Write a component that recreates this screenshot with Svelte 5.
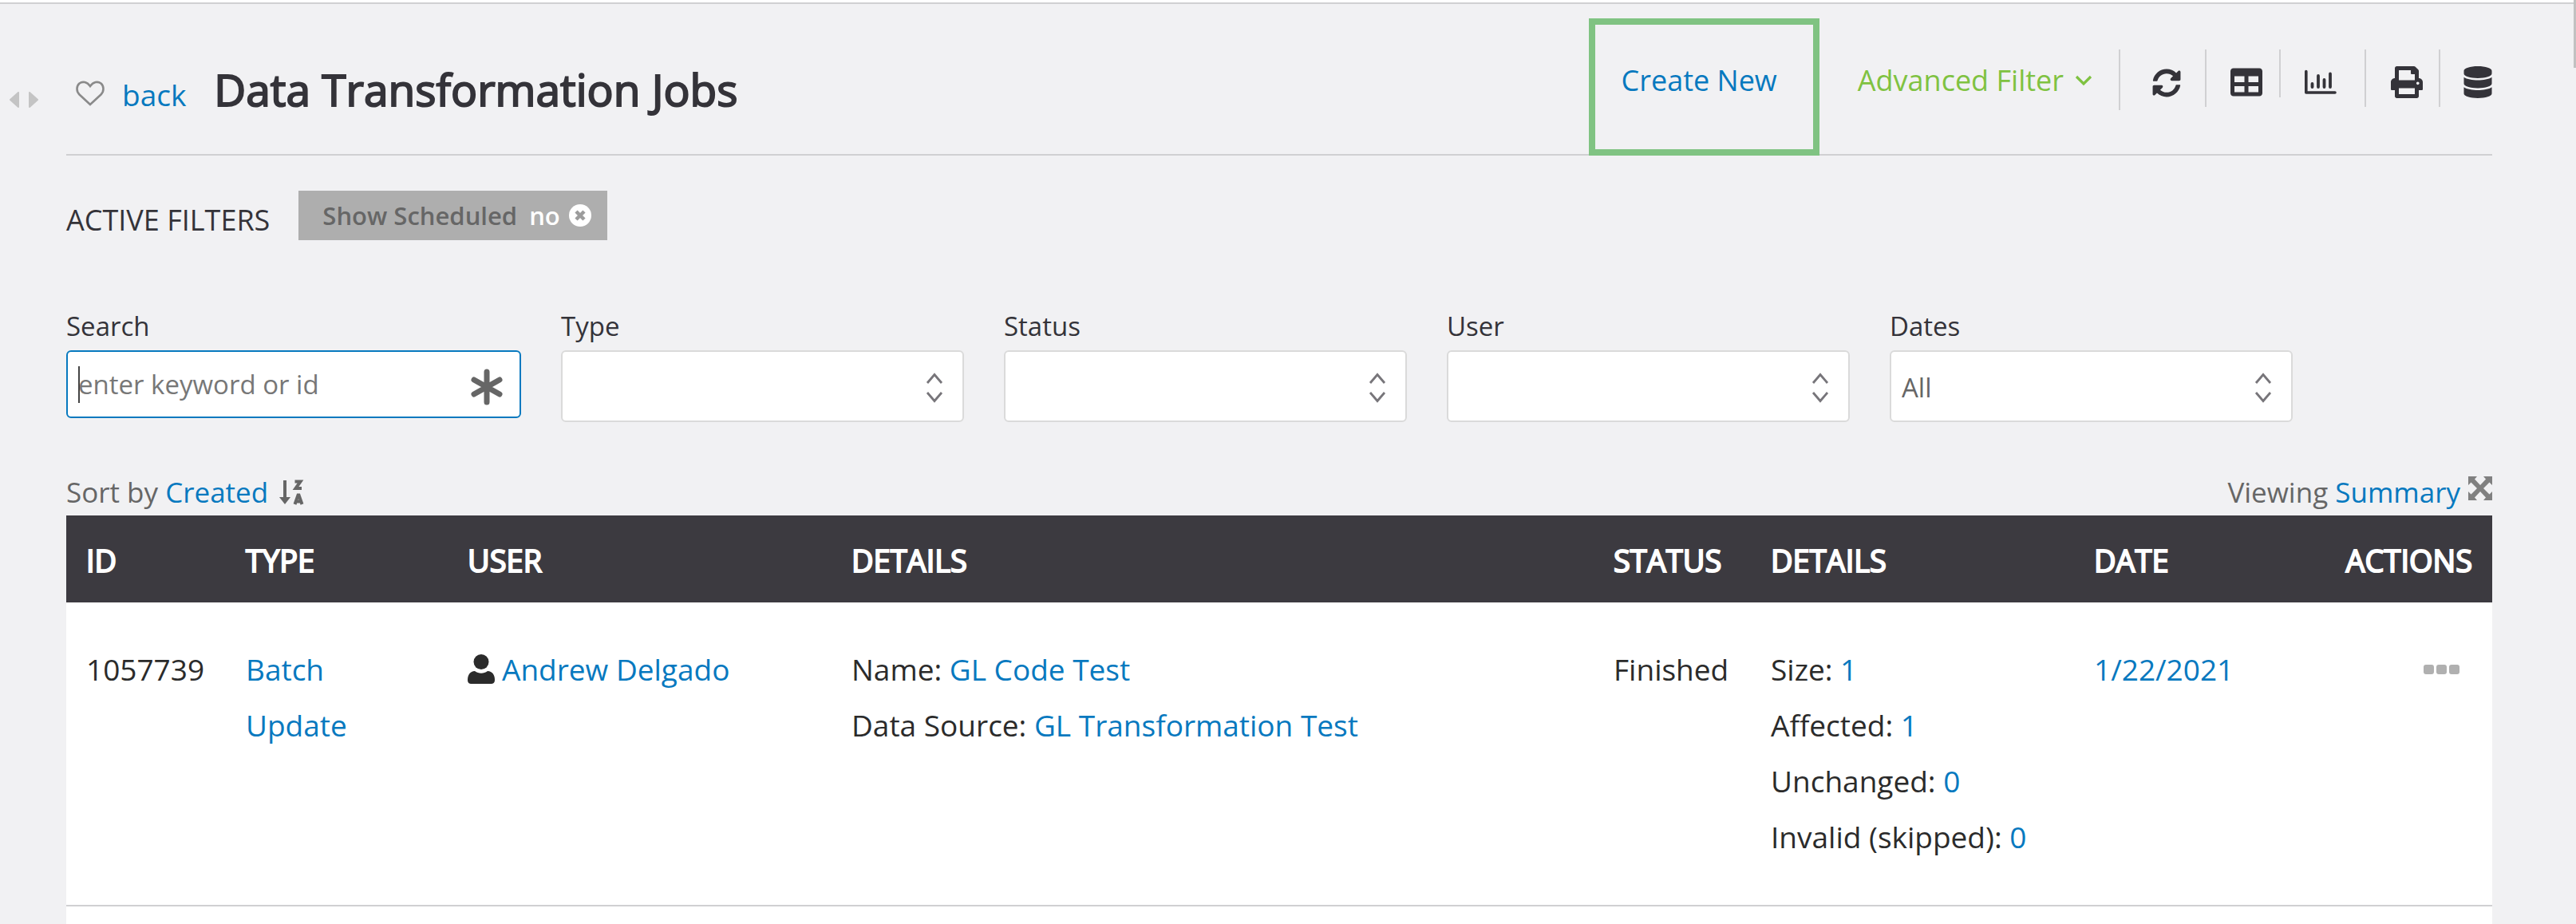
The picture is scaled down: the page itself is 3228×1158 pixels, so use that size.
<script>
  const selects = [
    { id: 'type', label: 'Type', value: '' },
    { id: 'status', label: 'Status', value: '' },
    { id: 'user', label: 'User', value: '' },
    { id: 'dates', label: 'Dates', value: 'All' }
  ];
  const counts = [
    { label: 'Size', value: 1 },
    { label: 'Affected', value: 1 },
    { label: 'Unchanged', value: 0 },
    { label: 'Invalid (skipped)', value: 0 }
  ];
</script>

<div class="page">
<div class="topline"></div>
<div class="scrollbar" aria-hidden="true"></div>
<div class="shell">
  <button class="resizer" aria-label="Resize panel">
    <svg viewBox="0 0 36 20" width="36" height="20"><path d="M11 1v18L1 10zM25 1v18L35 10z" fill="#c4c4c4" stroke="#c4c4c4" stroke-width="2" stroke-linejoin="round" /></svg>
  </button>
  <main>
    <header>
      <div class="heading">
        <button class="plain heart" aria-label="Add to favourites">
          <svg viewBox="0 0 36 32" width="36" height="32"><path d="M18 30L4.500 17.500C0.500 13.500 .5 7 4.500 3.500C8.500 .5 14 1.500 18 7C22 1.500 27.500 .5 31.500 3.500C35.500 7 35.500 13.500 31.500 17.500Z" fill="none" stroke="#8a8a8a" stroke-width="2.600" /></svg>
        </button>
        <a class="back" href="#back">back</a>
        <h1>Data Transformation Jobs</h1>
      </div>
      <nav class="tools">
        <a class="create" href="#create">Create New</a>
        <button class="plain advanced">
          Advanced Filter
          <svg viewBox="0 0 22 14" width="22" height="14"><path d="M2 2l9 9 9-9" fill="none" stroke="#7fc241" stroke-width="3.200" /></svg>
        </button>
        <div class="icons">
          <button class="plain ic refresh" aria-label="Refresh">
            <svg viewBox="0 0 512 512" width="36" height="36"><path fill="#343339" d="M370.700 133.300C339.500 104 298.900 88 255.800 88c-77.500.1-144.300 53.200-162.800 126.900-1.300 5.400-6.100 9.200-11.700 9.200H24.100c-7.500 0-13.200-6.800-11.800-14.200C33.900 94.900 134.800 8 256 8c66.400 0 126.800 26.100 171.300 68.700L463 41C478.100 25.900 504 36.600 504 57.900V192c0 13.300-10.700 24-24 24H345.900c-21.400 0-32.100-25.900-17-41l41.800-41.700zM32 296h134.100c21.400 0 32.100 25.900 17 41l-41.800 41.800c31.300 29.300 71.800 45.300 114.900 45.300 77.400-.1 144.300-53.100 162.800-126.800 1.300-5.400 6.100-9.200 11.700-9.200h57.300c7.500 0 13.200 6.800 11.800 14.200C478.100 417.100 377.200 504 256 504c-66.400 0-126.800-26.100-171.300-68.700L49 471C33.900 486.100 8 475.400 8 454.100V320c0-13.300 10.700-24 24-24z" /></svg>
          </button>
          <button class="plain ic table" aria-label="Table view">
            <svg viewBox="0 0 512 512" width="40" height="40"><path fill="#343339" d="M464 32H48C21.500 32 0 53.500 0 80v352c0 26.500 21.500 48 48 48h416c26.500 0 48-21.500 48-48V80c0-26.500-21.500-48-48-48zM224 416H64v-96h160v96zm0-160H64v-96h160v96zm224 160H288v-96h160v96zm0-160H288v-96h160v96z" /></svg>
          </button>
          <button class="plain ic chart" aria-label="Chart view">
            <svg viewBox="0 0 40 32" width="40" height="32" fill="none" stroke="#343339" stroke-linecap="round" stroke-linejoin="round"><path d="M1.800 2.500v26.500H38" stroke-width="3.600" /><path d="M9.500 18v4M17 8v14M24.500 13v9M32 5.500v16.500" stroke-width="3.800" /></svg>
          </button>
          <button class="plain ic print" aria-label="Print">
            <svg viewBox="0 0 512 512" width="40" height="40"><path fill="#343339" d="M448 192V77.300c0-8.500-3.400-16.600-9.400-22.600L393.400 9.400c-6-6-14.100-9.400-22.600-9.400H96C78.300 0 64 14.300 64 32v160c-35.400 0-64 28.700-64 64v112c0 8.800 7.200 16 16 16h48v96c0 17.700 14.300 32 32 32h320c17.700 0 32-14.300 32-32v-96h48c8.800 0 16-7.200 16-16V256c0-35.400-28.700-64-64-64zm-64 256H128v-96h256v96zm0-224H128V64h192v48c0 8.800 7.200 16 16 16h48v96zm48 72c-13.300 0-24-10.800-24-24 0-13.300 10.700-24 24-24s24 10.700 24 24c0 13.300-10.700 24-24 24z" /></svg>
          </button>
          <button class="plain ic database" aria-label="Data sources">
            <svg viewBox="0 0 448 512" width="36" height="40"><path fill="#343339" d="M448 73.100v45.700C448 159.100 347.700 192 224 192S0 159.100 0 118.900V73.100C0 32.900 100.300 0 224 0s224 32.900 224 73.100zM448 176v102.900C448 319.100 347.700 352 224 352S0 319.100 0 278.900V176c48.100 33.100 136.200 48.600 224 48.600S399.900 209.100 448 176zm0 160v102.900C448 479.100 347.700 512 224 512S0 479.100 0 438.900V336c48.100 33.100 136.200 48.600 224 48.600S399.900 369.100 448 336z" /></svg>
          </button>
        </div>
      </nav>
    </header>

    <section class="active">
      <h2>ACTIVE FILTERS</h2>
      <div class="chip">
        <span>Show Scheduled</span>
        <strong>no</strong>
        <button class="plain" aria-label="Remove filter">
          <svg viewBox="0 0 28 28" width="28" height="28"><circle cx="14" cy="14" r="14" fill="#fff" /><path d="M9 9l10 10M19 9L9 19" stroke="#9c9c9c" stroke-width="4.500" /></svg>
        </button>
      </div>
    </section>

    <form class="filters">
      <div class="field search">
        <label for="q">Search</label>
        <div class="box">
          <input id="q" type="text" placeholder="enter keyword or id" />
          <span class="caret"></span>
          <svg viewBox="0 0 42 46" width="42" height="46"><path d="M21 4v38M5 14l32 18M37 14L5 32" stroke="#666" stroke-width="7" stroke-linecap="round" /></svg>
        </div>
      </div>
      {#each selects as s}
        <div class="field">
          <label for={s.id}>{s.label}</label>
          <div class="box">
            <select id={s.id}><option>{s.value}</option></select>
            <svg viewBox="0 0 22 38" width="22" height="38"><path d="M2 13l9-10.500L20 13M2 25l9 10.500L20 25" fill="none" stroke="#77757a" stroke-width="2.800" /></svg>
          </div>
        </div>
      {/each}
    </form>

    <div class="bar">
      <div class="sort">
        <span>Sort by <a href="#sort">Created</a></span>
        <svg viewBox="0 0 32 32" width="32" height="32" fill="none" stroke="#666"><path d="M7 1v24" stroke-width="4" /><path d="M0 22h14L7 31z" fill="#666" stroke="none" /><path d="M19.500 2.500h7l-6 8.500h7.500" stroke-width="4" /><path d="M19.500 31l4-11.500h1l4 11.500M21 27.500h6" stroke-width="4" /></svg>
      </div>
      <div class="view">
        <span>Viewing <a href="#view">Summary</a></span>
        <button class="plain" aria-label="Expand">
          <svg viewBox="0 0 30 30" width="30" height="30"><path d="M0 0h11L8 3.500l7 7.500 7-7.500L19 0h11v11l-3.500-3.500L19 15l7.500 7.500L30 19v11H19l3-3.500-7-7.500-7 7.500 3 3.500H0V19l3.500 3.500L11 15 3.500 7.500 0 11z" fill="#808080" /></svg>
        </button>
      </div>
    </div>

    <div class="sheet">
    <table>
      <colgroup>
        <col class="c1" /><col class="c2" /><col class="c3" /><col class="c4" /><col class="c5" /><col class="c6" /><col class="c7" /><col class="c8" />
      </colgroup>
      <thead>
        <tr><th>ID</th><th>TYPE</th><th>USER</th><th>DETAILS</th><th>STATUS</th><th>DETAILS</th><th>DATE</th><th class="end">ACTIONS</th></tr>
      </thead>
      <tbody>
        <tr>
          <td>1057739</td>
          <td><a href="#job">Batch<br />Update</a></td>
          <td>
            <div class="person">
              <svg viewBox="0 0 34 38" width="34" height="38" fill="#2b2b2b"><ellipse cx="17" cy="9.500" rx="9.500" ry="9.500" /><path d="M9 21c5 3.500 11 3.500 16 0 6 0 9 5 9 11 0 4-2 5-5 5H5c-3 0-5-1-5-5 0-6 3-11 9-11z" /></svg>
              <a href="#user">Andrew Delgado</a>
            </div>
          </td>
          <td>Name: <a href="#name">GL Code Test</a><br />Data Source: <a href="#source">GL Transformation Test</a></td>
          <td>Finished</td>
          <td>
            {#each counts as c}
              <div>{c.label}: <a href="#count">{c.value}</a></div>
            {/each}
          </td>
          <td><a href="#date">1/22/2021</a></td>
          <td class="end">
            <button class="plain more" aria-label="Row actions">
              <svg viewBox="0 0 46 12" width="46" height="12" fill="#b0b0b0"><rect width="13" height="12" rx="3" /><rect x="16" width="13" height="12" rx="3" /><rect x="32" width="13" height="12" rx="3" /></svg>
            </button>
          </td>
        </tr>
      </tbody>
    </table>
    </div>
  </main>
</div>
</div>

<style>
  :global(body) { background: #f1f1f3; }
  :global(#app) { font-family: 'Open Sans', sans-serif; font-size: 36px; color: #2b2b2b; }
  * { box-sizing: border-box; }
  a { color: #0779bf; text-decoration: none; }
  svg { display: block; flex: none; }
  .plain { border: 0; background: none; padding: 0; font: inherit; color: inherit; display: flex; align-items: center; }
  .page { display: flex; flex-direction: column; min-height: 100vh; }
  .topline { height: 5px; background: #fff; border-bottom: 2px solid #d0d0d2; flex: none; }
  .scrollbar { position: absolute; top: 0; right: 0; width: 3px; height: 85px; background: #c1c1c1; }
  .shell { display: flex; flex: 1; }
  .resizer { width: 83px; margin-top: 110px; padding: 0 0 0 12px; border: 0; background: none; flex: none; display: flex; align-self: flex-start; }
  main { flex: 1; min-width: 0; margin-right: 105px; display: flex; flex-direction: column; }
  header { display: flex; justify-content: space-between; height: 190px; border-bottom: 2px solid #d0d0d2; }
  .heading { display: flex; align-items: baseline; padding: 68px 0 0 12px; }
  .heart { padding-bottom: 4px; }
  .back { margin: 0 35px 0 22px; font-size: 37px; }
  h1 { margin: 0; font-size: 55px; line-height: 78px; font-weight: 400; color: #343339; -webkit-text-stroke: 2px #343339; }
  .tools { display: flex; align-items: flex-start; font-size: 36px; line-height: 50px; }
  .create { border: 8px solid #80c382; margin: 18px 48px 0 0; height: 172px; padding: 45px 45px 0 33px; }
  .advanced { color: #7fc241; gap: 14px; margin: 71px 33px 0 0; }
  .icons { display: flex; align-items: flex-start; padding-top: 57px; }
  .ic { height: 72px; border-left: 2px solid #d0d0d2; align-items: flex-start; padding-top: 21px; }
  .refresh { width: 108px; height: 76px; padding: 24px 0 0 40px; }
  .table { width: 93px; padding-left: 30px; }
  .chart { width: 107px; height: 60px; padding: 25px 0 0 30px; }
  .print { width: 93px; padding-left: 31px; }
  .database { padding-left: 29px; }

  .active { display: flex; align-items: center; gap: 36px; margin-top: 44px; height: 62px; }
  h2 { margin: 0; font-size: 36px; font-weight: 400; line-height: 48px; padding-top: 12px; color: #343339; }
  .chip { display: flex; align-items: center; height: 62px; padding: 0 20px 0 30px; background: #aeaeae; font-weight: 600; font-size: 31px; line-height: 40px; color: #666; }
  .chip strong { color: #fff; font-weight: 600; margin: 0 11px 0 15px; }

  .filters { display: flex; gap: 50px; margin-top: 84px; margin-right: 250px; align-items: flex-start; }
  .field { flex: 505 1 0; min-width: 0; color: #343339; }
  .search { flex-grow: 570; }
  label { display: block; font-size: 33px; line-height: 48px; margin-bottom: 6px; }
  .box { position: relative; height: 90px; }
  .search .box { height: 85px; }
  input, select { width: 100%; height: 100%; border: 2px solid #dadada; border-radius: 6px; background: #fff; font: 33px/48px 'Open Sans', sans-serif; color: #666; padding: 4px 13px 0; appearance: none; display: block; }
  input { border-color: #0779bf; padding-top: 0; }
  input::placeholder { color: #777; opacity: 1; }
  .caret { position: absolute; left: 15px; top: 20px; width: 2px; height: 46px; background: #444; }
  .box svg { position: absolute; right: 26px; top: 28px; pointer-events: none; }
  .search .box svg { right: 22px; top: 23px; }

  .bar { display: flex; justify-content: space-between; height: 117px; padding-top: 63px; font-size: 35px; line-height: 50px; color: #666; }
  .sort, .view { display: flex; align-items: flex-start; gap: 14px; }
  .sort svg { margin-top: 9px; }
  .view { gap: 10px; }
  .view .plain { margin-top: 5px; }

  .sheet { flex: 1; background: #fff; }
  table { width: 100%; border-collapse: collapse; table-layout: fixed; }
  .c1 { width: 200px; } .c2 { width: 278px; } .c3 { width: 481px; } .c4 { width: 955px; } .c5 { width: 197px; } .c6 { width: 405px; } .c7 { width: 270px; }
  thead { background: #3c3a40; color: #fff; }
  th { height: 109px; padding: 6px 25px 4px; text-align: left; font-size: 38px; font-weight: 400; -webkit-text-stroke: 2px #fff; }
  td { vertical-align: top; padding: 49px 25px 50px; line-height: 70px; font-size: 37px; }
  tbody tr { border-bottom: 2px solid #d0d0d2; }
  th.end { text-align: right; }
  td.end { padding-right: 40px; }
  .more { height: 70px; margin-left: auto; }
  .person { display: flex; align-items: center; gap: 9px; }
</style>
